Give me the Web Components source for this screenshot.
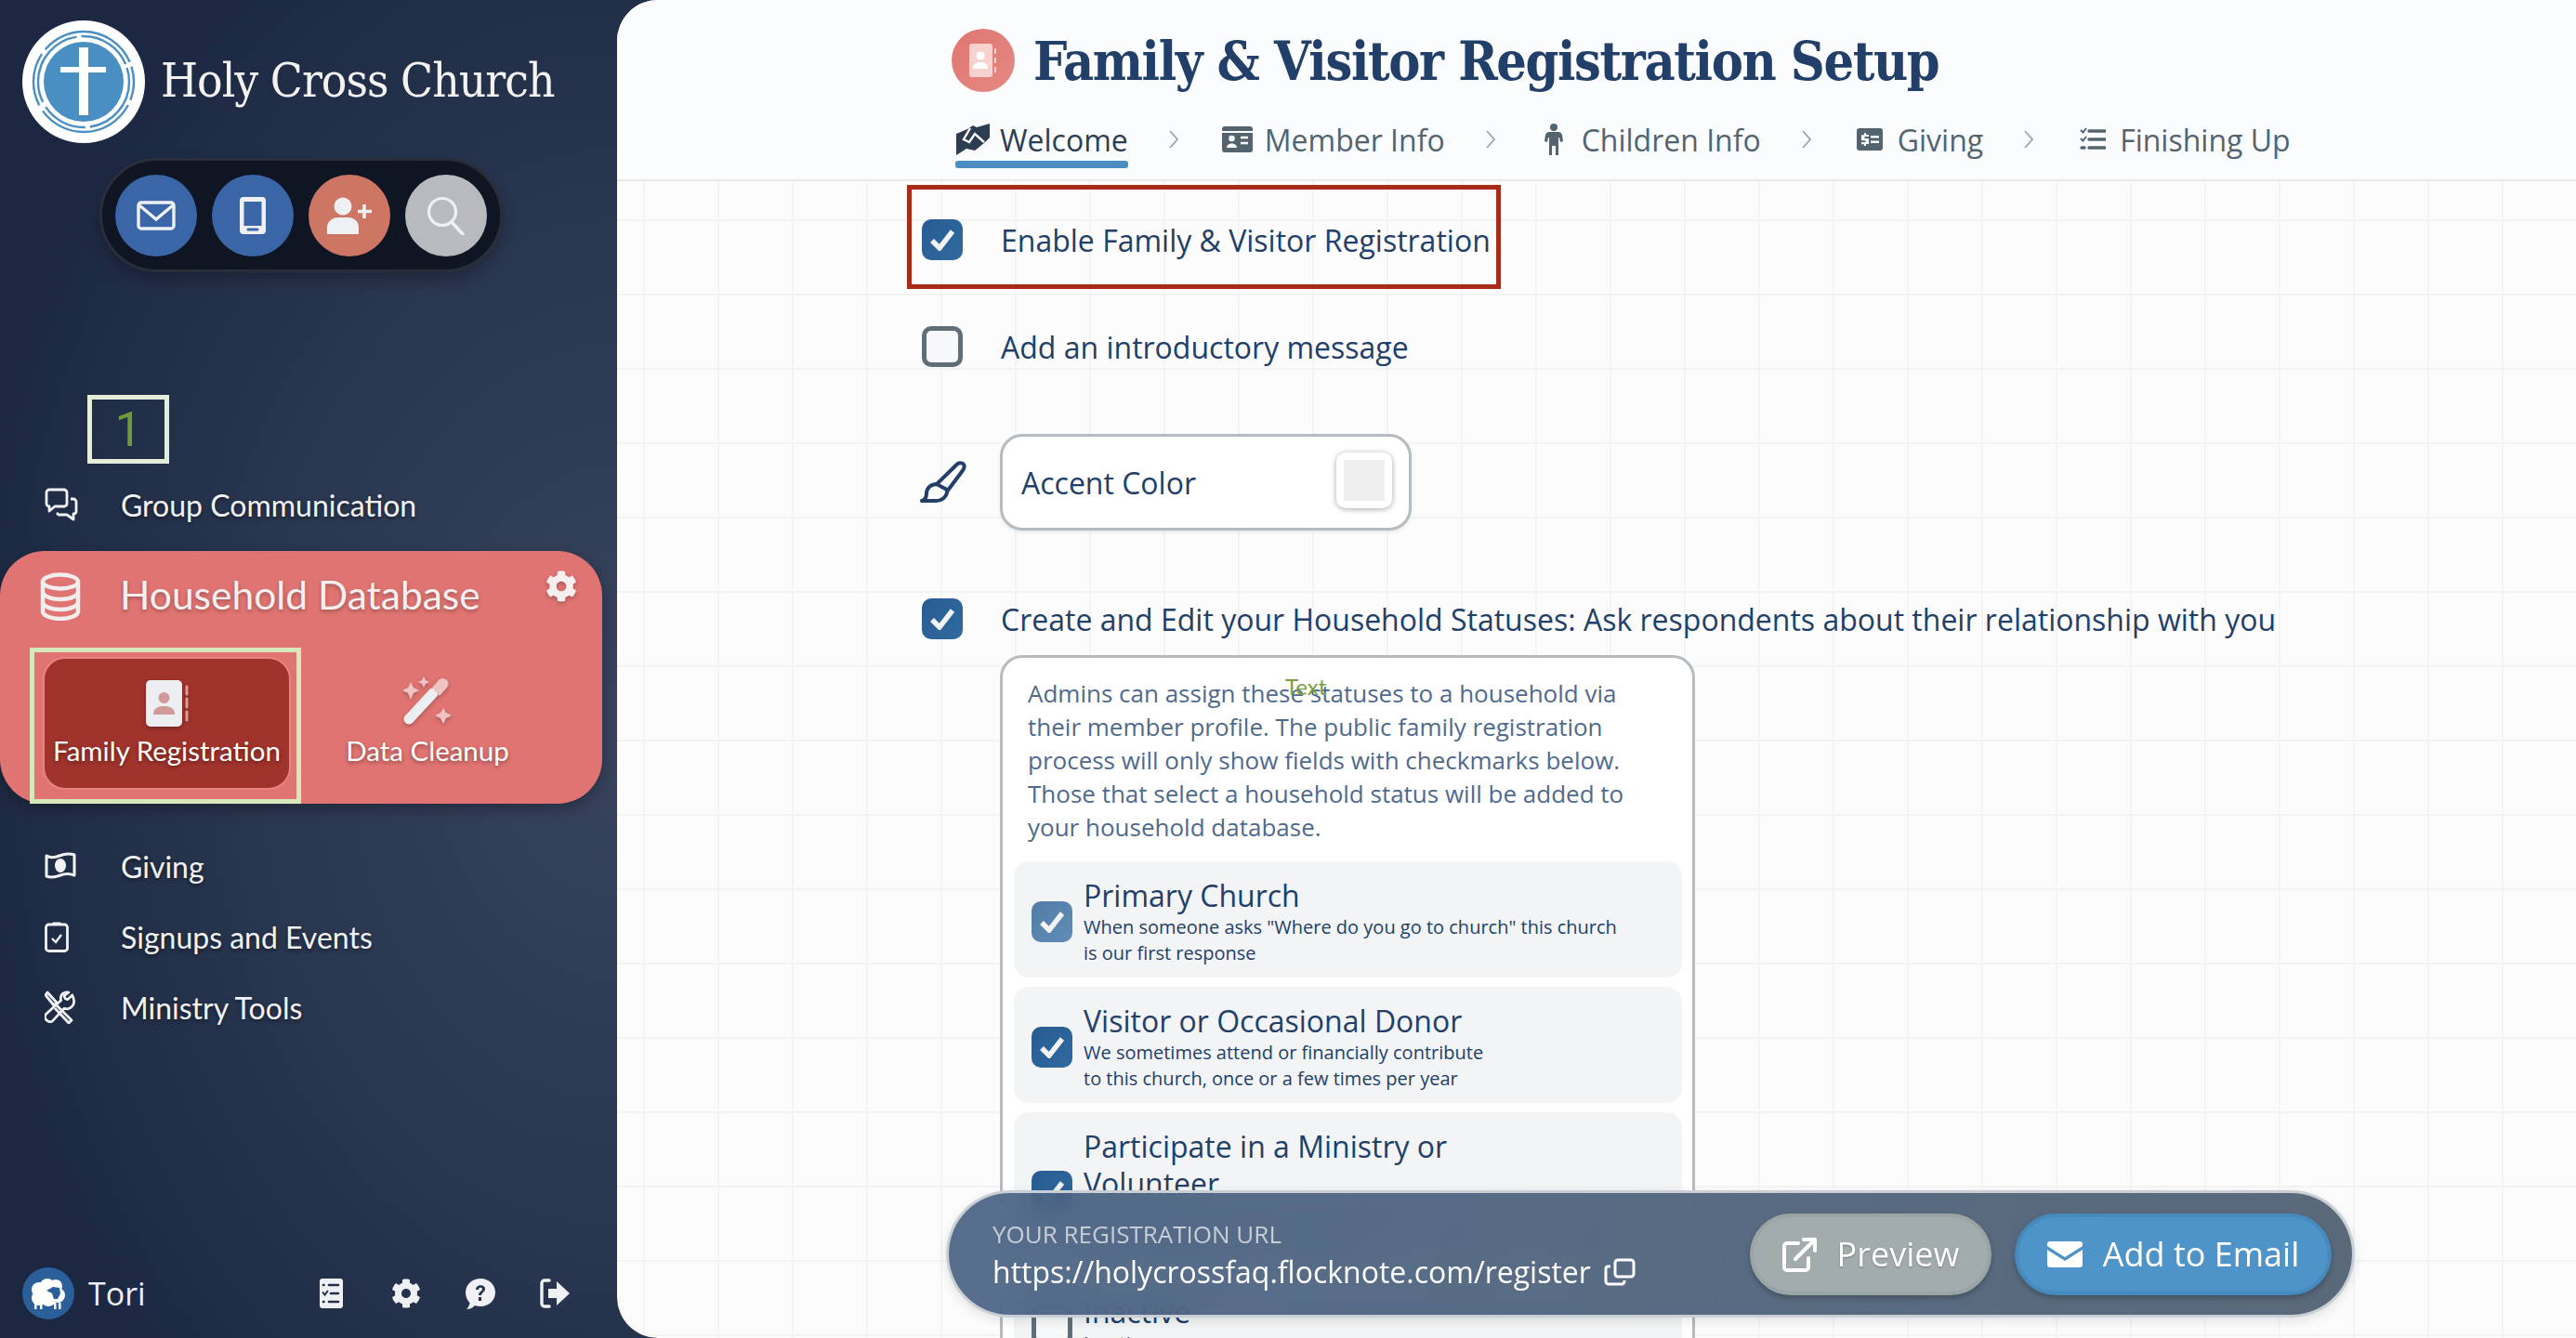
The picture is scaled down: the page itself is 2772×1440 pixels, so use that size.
<!DOCTYPE html>
<html lang="en">
<head>
<meta charset="utf-8">
<title>Family & Visitor Registration Setup</title>
<style>
  html, body { margin: 0; height: 1440px; overflow: hidden; background: #1c2842; }
</style>
</head>
<body>
<app-shell>
  <side-bar slot="side"></side-bar>
  <setup-page slot="main">
    <check-row checked highlight>Enable Family &amp; Visitor Registration</check-row>
    <check-row style="margin-top:40px">Add an introductory message</check-row>
    <accent-field style="margin-top:72px">Accent Color</accent-field>
    <check-row checked style="margin-top:73px">Create and Edit your Household Statuses: Ask respondents about their relationship with you</check-row>
    <status-card style="margin-top:17px">
      <span slot="intro">Admins can assign these statuses to a household via their member profile. The public family registration process will only show fields with checkmarks below. Those that select a household status will be added to your household database.</span>
      <status-option state="faded">
        Primary Church
        <span slot="desc">When someone asks "Where do you go to church" this church<br>is our first response</span>
      </status-option>
      <status-option state="on">
        Visitor or Occasional Donor
        <span slot="desc">We sometimes attend or financially contribute<br>to this church, once or a few times per year</span>
      </status-option>
      <status-option state="on" style="padding-bottom:15px">
        Participate in a Ministry or<br>Volunteer
        <span slot="desc">We help with a ministry or volunteer<br>at this church from time to time</span>
      </status-option>
      <status-option state="off">
        Inactive
        <span slot="desc">Inactive</span>
      </status-option>
    </status-card>
    <url-bar slot="float"></url-bar>
  </setup-page>
</app-shell>

<script>
// icons are all drawn here so every shadow root can share them
const GEAR = 'M487.4 315.7l-42.6-24.6c4.3-23.2 4.3-47 0-70.2l42.6-24.6c4.9-2.8 7.1-8.6 5.5-14-11.1-35.6-30-67.8-54.7-94.6-3.8-4.1-10-5.1-14.8-2.3L380.8 110c-17.9-15.4-38.5-27.3-60.8-35.1V25.8c0-5.6-3.9-10.5-9.4-11.7-36.7-8.2-74.3-7.8-109.2 0-5.5 1.2-9.4 6.1-9.4 11.7V75c-22.2 7.9-42.8 19.8-60.8 35.1L88.7 85.5c-4.9-2.8-11-1.9-14.8 2.3-24.7 26.7-43.6 58.9-54.7 94.6-1.7 5.4.6 11.2 5.5 14L67.3 221c-4.3 23.2-4.3 47 0 70.2l-42.6 24.6c-4.9 2.8-7.1 8.6-5.5 14 11.1 35.6 30 67.8 54.7 94.6 3.8 4.1 10 5.1 14.8 2.3l42.6-24.6c17.9 15.4 38.5 27.3 60.8 35.1v49.2c0 5.6 3.9 10.5 9.4 11.7 36.7 8.2 74.3 7.8 109.2 0 5.5-1.2 9.4-6.1 9.4-11.7v-49.2c22.2-7.9 42.8-19.8 60.8-35.1l42.6 24.6c4.9 2.8 11 1.9 14.8-2.3 24.7-26.7 43.6-58.9 54.7-94.6 1.5-5.5-.7-11.3-5.6-14.1zM256 336c-44.1 0-80-35.9-80-80s35.9-80 80-80 80 35.9 80 80-35.9 80-80 80z';

function svg(w, h, vb, body, extra = '') {
  return `<svg width="${w}" height="${h}" viewBox="${vb}" style="display:block;flex:none" ${extra}>${body}</svg>`;
}

const icons = {
  logo: svg(132, 132, '0 0 132 132', `
    <circle cx="66" cy="66" r="66" fill="#fff"/>
    <circle cx="66" cy="66" r="43" fill="#4a8fc1"/>
    <g fill="none" stroke="#4a8fc1" stroke-width="2.4">
      <circle cx="66" cy="66" r="49" stroke-dasharray="70 5 50 6 92 5 60 4"/>
      <circle cx="66" cy="66" r="54" stroke-dasharray="40 6 110 7 58 6 110 5" stroke-dashoffset="20"/>
    </g>
    <rect x="61" y="29" width="10" height="73" fill="#fff"/>
    <rect x="41" y="50" width="49" height="6" fill="#fff"/>`),
  mail: svg(42, 32, '0 0 42 32', `<rect x="2" y="2" width="38" height="28" rx="3" fill="none" stroke="#eef0f3" stroke-width="3.4"/><path d="M3 5l18 15L39 5" fill="none" stroke="#eef0f3" stroke-width="3.4"/>`),
  phone: svg(28, 40, '0 0 28 40', `<path fill-rule="evenodd" fill="#eef0f3" d="M4 0h20a4 4 0 0 1 4 4v32a4 4 0 0 1-4 4H4a4 4 0 0 1-4-4V4a4 4 0 0 1 4-4zM4.500 5v26h19V5zM9 33.500a1.400 1.400 0 0 0 0 3h10a1.400 1.400 0 0 0 0-3z"/>`),
  userplus: svg(48, 40, '0 0 48 40', `<circle cx="17" cy="10" r="9.500" fill="#eef0f3"/><path d="M0 40v-7c0-7 6-11 12-11h10c7 0 12 4 12 11v7z" fill="#eef0f3"/><path d="M40 8v15M33 15.500h15" stroke="#eef0f3" stroke-width="3.600"/>`),
  search: svg(42, 42, '0 0 42 42', `<circle cx="17" cy="17" r="14.500" fill="none" stroke="#eef0f3" stroke-width="3.200"/><path d="M27 28l12 13" stroke="#eef0f3" stroke-width="3.600" stroke-linecap="round"/>`),
  chat: svg(36, 36, '0 0 36 36', `<g fill="none" stroke="#f0f2f5" stroke-width="2.800" stroke-linejoin="round"><path d="M5 2h16a3 3 0 0 1 3 3v12a3 3 0 0 1-3 3H11l-6 5v-5a3 3 0 0 1-3-3V5a3 3 0 0 1 3-3z"/><path d="M28 12h3a3 3 0 0 1 3 3v11a3 3 0 0 1-3 2v6l-7-5H15l-2-2"/></g>`),
  db: svg(44, 52, '0 0 44 52', `<g fill="none" stroke="#f3eeee" stroke-width="4.400"><ellipse cx="22" cy="10" rx="19" ry="7.500"/><path d="M3 10v32c0 4 8 8 19 8s19-4 19-8V10"/><path d="M3 21c0 4 8 8 19 8s19-4 19-8M3 32c0 4 8 8 19 8s19-4 19-8"/></g>`),
  gear: (s, c) => svg(s, s, '0 0 512 512', `<path fill="${c}" d="${GEAR}"/>`),
  book: svg(46, 50, '0 0 46 50', `<rect x="0" y="0" width="39" height="50" rx="5" fill="#eceef1"/><circle cx="19.500" cy="19" r="6" fill="#d19a98"/><path d="M8 37c0-7 5-9 11.500-9S31 30 31 37z" fill="#d19a98"/><path d="M44 7v8M44 20v9M44 34v9" stroke="#e39a96" stroke-width="3" stroke-linecap="round"/>`),
  wand: svg(56, 54, '0 0 56 54', `<path d="M8 46L34 18" stroke="#eceef1" stroke-width="11" stroke-linecap="round"/><path d="M33 12l7-8a6 6 0 0 1 9 8l-8 9z" fill="#eec3c2"/><path d="M10 6l3 6 6 3-6 3-3 7-3-7-6-3 6-3zM24 0l2 4 4 2-4 2-2 4-2-4-4-2 4-2zM45 34l3 5 6 3-6 3-3 6-3-6-6-3 6-3z" fill="#eec3c2"/>`),
  cash: svg(34, 34, '0 0 34 34', `<path d="M2 6c5 3 9 2 14 0s10-3 16-1v22c-5-2-10-2-15 0s-10 3-15 1z" fill="none" stroke="#f0f2f5" stroke-width="3" stroke-linejoin="round"/><ellipse cx="17" cy="16.500" rx="6" ry="7.500" fill="#f0f2f5"/>`),
  clipboard: svg(26, 34, '0 0 26 34', `<rect x="1.500" y="4" width="23" height="28.500" rx="3" fill="none" stroke="#f0f2f5" stroke-width="2.800"/><path d="M8 5V3a1.500 1.500 0 0 1 1.500-1.500h7A1.500 1.500 0 0 1 18 3v2z" fill="#f0f2f5"/><path d="M8 19l4 4 6-8" fill="none" stroke="#f0f2f5" stroke-width="2.400"/>`),
  tools: svg(34, 36, '0 0 34 36', `<g fill="none" stroke="#f0f2f5" stroke-width="2.800" stroke-linejoin="round"><path d="M3 2L1 5l9 11 3-3z"/><path d="M13 16l16 16-3 3-15-16"/><path d="M31 4l-5 5-3-1-1-3 5-4c-5-1-9 2-9 7 0 1 .500 2 .500 2L2 25c-2 2-2 5 0 7s5 3 7 1l13-14c5 2 11-2 11-8 0-2-1-4-2-7z" transform="translate(0 1) scale(.96)"/></g>`),
  sheep: svg(56, 56, '0 0 56 56', `
    <circle cx="28" cy="28" r="28" fill="#2a5f9a"/>
    <g fill="#fff"><circle cx="18" cy="24" r="8"/><circle cx="27" cy="20" r="8"/><circle cx="36" cy="20" r="7"/><circle cx="18" cy="33" r="8"/><circle cx="28" cy="33" r="9"/><circle cx="38" cy="30" r="8"/>
    <rect x="13" y="38" width="2.500" height="7"/><rect x="19" y="38" width="2.500" height="7"/><rect x="34" y="38" width="2.500" height="7"/><rect x="39" y="38" width="2.500" height="7"/></g>
    <path d="M26 25l7-4 7 1 1 6-3 6-4 0-2-6z" fill="#2a5f9a"/>`),
  list: svg(25, 32, '0 0 25 32', `<rect width="25" height="32" rx="3" fill="#eef0f3"/><g fill="none" stroke="#24304b" stroke-width="2.600" stroke-linecap="round"><path d="M10 7h10M12 16h8M10 25h10M4 7h.5M4 25h.5"/><path d="M3.500 15l2 2.500 3-4" stroke-width="2"/></g>`),
  help: svg(32, 33, '0 0 32 33', `<path fill-rule="evenodd" fill="#eef0f3" d="M16 0c9 0 16 6.500 16 15s-7 15-16 15c-2 0-4-.400-6-1-2 2-5 4-9 4 2-2 3-4 3.500-7C1.500 23 0 19.500 0 15 0 6.500 7 0 16 0zM11 12h3c0-3 4-3 4-.5 0 2-4 2.500-4 6.500h3c0-3 4-3.500 4-7 0-5-10-5.500-10 1zM14 20v4h3v-4z"/>`),
  logout: svg(32, 32, '0 0 32 32', `<path d="M10 2H5a3 3 0 0 0-3 3v22a3 3 0 0 0 3 3h5" fill="none" stroke="#eef0f3" stroke-width="3.400" stroke-linecap="round"/><path d="M9 11h9V3l14 13-14 13v-8H9z" fill="#eef0f3"/>`),
  chevron: svg(10, 20, '0 0 10 20', `<path d="M1 1l8 9-8 9" fill="none" stroke="#9aa5a8" stroke-width="1.800"/>`, 'class="chev"'),
  handshake: svg(36, 34, '0 0 36 34', `<path fill="#2d3e52" d="M0 11L12 6l6-4 4 2L36 0v15l-6 6-10 8-9-2-11 7z"/><path d="M15 5L8 17l6 3 6-9 10 9" stroke="#fbfcfe" stroke-width="2.400" fill="none"/>`),
  card: svg(33, 28, '0 0 33 28', `<path fill="#53646f" d="M3 0h27a3 3 0 0 1 3 3v2H0V3a3 3 0 0 1 3-3zM0 7h33v18a3 3 0 0 1-3 3H3a3 3 0 0 1-3-3z"/><circle cx="10.500" cy="13" r="3.300" fill="#fbfcfe"/><path d="M5 23c0-6 11-6 11 0z" fill="#fbfcfe"/><path d="M20 12h8M20 18h8" stroke="#fbfcfe" stroke-width="2.600"/>`),
  child: svg(20, 34, '0 0 20 34', `<circle cx="10" cy="4" r="4" fill="#53646f"/><path d="M5 9h10c2 0 3 1 4 3l1 7-3 1-1-5-1 0v19h-3V24H8v10H5V15l-1 0-1 5-3-1 1-7c1-2 2-3 4-3z" fill="#53646f"/>`),
  money: svg(28, 24, '0 0 28 24', `<path fill-rule="evenodd" fill="#53646f" d="M3 0h22a3 3 0 0 1 3 3v18a3 3 0 0 1-3 3H3a3 3 0 0 1-3-3V3a3 3 0 0 1 3-3zM15 8v2.500h9V8zM15 13.500V16h9v-2.500zM8 5v2.200H5v6h4.500v1.800H5v2.200h3V19h2v-2h3v-6H8.500V9H13V7h-3V5z"/>`),
  tasks: svg(28, 26, '0 0 28 26', `<g stroke="#53646f" fill="none"><path d="M10 4h18M10 13h18M10 22h18" stroke-width="3.400" stroke-linecap="round"/><path d="M1 3l2.500 2.500L7 1M1 12l2.500 2.500L7 10" stroke-width="2"/><path d="M2 22h3" stroke-width="3.400" stroke-linecap="round"/></g>`),
  brush: svg(50, 46, '0 0 50 46', `<g fill="none" stroke="#213f68" stroke-width="4" stroke-linejoin="round" stroke-linecap="round"><path d="M18 25L40 3.500c2-2 7-1.500 7.500 1.500.5 2-.5 4-2 6L29 33"/><path d="M18 25c-7 0-11 5-11 10 0 3-1 7-5 8h15c8 0 13-6 12-12z"/></g>`),
  external: svg(37, 38, '0 0 37 38', `<g fill="none" stroke="#fff" stroke-width="4" stroke-linecap="round" stroke-linejoin="round"><path d="M17 7H5a3 3 0 0 0-3 3v23a3 3 0 0 0 3 3h20a3 3 0 0 0 3-3V23"/><path d="M14 24L34 4M23 3h12v12"/></g>`),
  envelope: svg(38, 28, '0 0 38 28', `<path fill="#fff" d="M3 0h32a3 3 0 0 1 3 3v2L19 17 0 5V3a3 3 0 0 1 3-3zM0 9v16a3 3 0 0 0 3 3h32a3 3 0 0 0 3-3V9L19 21z"/>`),
  copy: svg(34, 30, '0 0 34 30', `<g fill="none" stroke="#fff" stroke-width="3" stroke-linejoin="round"><rect x="12" y="2" width="20" height="18" rx="3"/><path d="M7 9H4a2.500 2.500 0 0 0-2 2.500V25a3 3 0 0 0 3 3h14a3 3 0 0 0 3-3v-1"/></g>`),
  titlebook: svg(30, 36, '0 0 30 36', `<rect width="25" height="36" rx="3" fill="#f7d2cf"/><circle cx="12" cy="13" r="4.500" fill="#fff"/><path d="M4 27c0-5 3-7 8-7s8 2 8 7z" fill="#fff"/><path d="M28 5v6M28 15v6M28 25v6" stroke="#f7d2cf" stroke-width="2"/>`),
  check: svg(28, 24, '0 0 28 24', `<path d="M3 13l8 8L25 3" fill="none" stroke="#f0f2f4" stroke-width="5.500"/>`)
};

function makeEl(name, css, html) {
  customElements.define(name, class extends HTMLElement {
    constructor() {
      super();
      this.attachShadow({ mode: 'open' });
    }
    connectedCallback() {
      const body = typeof html === 'function' ? html(this) : html;
      this.shadowRoot.innerHTML = `<style>${css}</style>${body}`;
    }
  });
}

makeEl('app-shell', `
  :host { display: grid; grid-template-columns: 664px 1fr; width: 2772px; height: 1440px; overflow: hidden;
    background: radial-gradient(ellipse 720px 1000px at 664px 54%, #38445d 0%, #29364f 55%, #1c2842 100%); }
`, `<slot name="side"></slot><slot name="main"></slot>`);

makeEl('nav-item', `
  :host { display: flex; align-items: center; height: 76px; color: #f0f2f5; font: 400 32px Lato, sans-serif;
    text-shadow: 0 2px 4px rgba(0,0,0,.45); }
  .in { width: 130px; padding-left: 48px; box-sizing: border-box; }
`, el => `<div class="in">${icons[el.getAttribute('icon')]}</div><slot></slot>`);

makeEl('db-tile', `
  :host { display: flex; flex-direction: column; align-items: center; color: #fff; font: 400 29.500px Lato, sans-serif;
    text-shadow: 0 2px 4px rgba(0,0,0,.4); box-sizing: border-box; }
  .ic { height: 50px; display: flex; align-items: flex-end; margin-bottom: 6px; filter: drop-shadow(0 2px 2px rgba(0,0,0,.25)); }
  span { line-height: 40px; white-space: nowrap; }
`, el => `<div class="ic">${icons[el.getAttribute('icon')]}</div><span><slot></slot></span>`);

makeEl('db-card', `
  :host { display: block; width: 648px; height: 272px; box-sizing: border-box; margin-top: 12px; position: relative;
    background: #e07472; border-radius: 48px; box-shadow: 0 6px 16px rgba(0,0,0,.28); }
  .head { display: flex; align-items: center; height: 98px; padding-left: 43px; color: #f6efef;
    font: 400 42.500px Lato, sans-serif; text-shadow: 0 2px 4px rgba(0,0,0,.3); }
  .head span { margin: 0 0 5px 42px; flex: 1; }
  .head .g { margin: -22px 27px 0 0; filter: drop-shadow(0 2px 2px rgba(0,0,0,.25)); }
  .tiles { display: flex; margin: 6px 0 0 32px; }
  .sel { width: 292px; height: 168px; box-sizing: border-box; border: 5px solid #d8e8bd; padding: 5px 6px 10px 9px; }
  .on { height: 143px; box-sizing: border-box; background: #a1332d; border: 2px solid #e8857f; border-radius: 24px; padding-top: 23px; }
  .off { width: 272px; padding-top: 35px; }
`, `
  <div class="head">${icons.db}<span>Household Database</span><div class="g">${icons.gear(34, '#f6efef')}</div></div>
  <div class="tiles">
    <div class="sel"><div class="on"><db-tile icon="book">Family Registration</db-tile></div></div>
    <div class="off"><db-tile icon="wand">Data Cleanup</db-tile></div>
  </div>`);

makeEl('side-bar', `
  :host { display: flex; flex-direction: column; height: 1440px; box-sizing: border-box; padding-bottom: 20px; }
  .brand { display: flex; align-items: center; gap: 17px; margin: 22px 0 0 24px; color: #f3f3f1;
    font: 400 51px "DejaVu Serif Condensed", "Liberation Serif", serif; letter-spacing: -1px; }
  .brand span { margin-bottom: 4px; }
  .pill { display: flex; gap: 16px; width: 434px; height: 123px; margin: 16px 0 0 107px; padding: 15px 14px; box-sizing: border-box;
    background: #0f1522; border: 3px solid #2a2e38; border-radius: 62px; box-shadow: 0 8px 16px rgba(0,0,0,.25); }
  .pill div { width: 88px; height: 88px; border-radius: 50%; display: flex; align-items: center; justify-content: center; }
  .note { width: 88px; height: 74px; margin: 132px 0 0 94px; box-sizing: border-box; border: 5px solid #e4edd8;
    color: #6f9a3a; font: 400 52px Roboto, sans-serif; display: flex; align-items: center; justify-content: center; }
  .top { margin-top: 6px; }
  .after { margin-top: 29px; }
  .foot { margin-top: auto; display: flex; align-items: center; height: 56px; padding-left: 24px; color: #eef0f3;
    font: 400 34px "Open Sans", sans-serif; }
  .foot span { margin-left: 15px; width: 249px; flex: none; }
  .foot .ics { display: flex; align-items: center; gap: 48px; }
  .foot .ics > :first-child { margin-right: 4px; }
`, `
  <div class="brand">${icons.logo}<span>Holy Cross Church</span></div>
  <div class="pill">
    <div style="background:#3a66a8">${icons.mail}</div>
    <div style="background:#3a66a8">${icons.phone}</div>
    <div style="background:#cd7663">${icons.userplus}</div>
    <div style="background:#b9babd">${icons.search}</div>
  </div>
  <div class="note">1</div>
  <nav-item class="top" icon="chat">Group Communication</nav-item>
  <db-card></db-card>
  <nav-item class="after" icon="cash">Giving</nav-item>
  <nav-item icon="clipboard">Signups and Events</nav-item>
  <nav-item icon="tools">Ministry Tools</nav-item>
  <div class="foot">${icons.sheep}<span>Tori</span>
    <div class="ics">${icons.list}${icons.gear(32, '#eef0f3')}${icons.help}${icons.logout}</div>
  </div>`);

makeEl('wizard-tab', `
  :host { display: flex; align-items: center; gap: 13px; color: #53646f; font: 400 32px "Open Sans", sans-serif;
    height: 48px; position: relative; white-space: nowrap; }
  :host([active]) { color: #2d3e52; }
  :host([active])::after { content: ""; position: absolute; left: -2px; right: 0; top: 47px; height: 8px; background: #4a8dc0; border-radius: 3px; }
  .i { width: 33px; display: flex; justify-content: center; }
`, el => `<div class="i">${icons[el.getAttribute('icon')]}</div><slot></slot>`);

makeEl('setup-page', `
  :host { display: block; position: relative; height: 1440px; overflow: hidden; border-radius: 44px 0 0 44px;
    background-color: #fcfcfc;
    background-image: linear-gradient(#f2f4f5 2px, transparent 2px), linear-gradient(90deg, #f2f4f5 2px, transparent 2px);
    background-size: 80px 80px; background-position: 28px 76px; }
  header { height: 195px; box-sizing: border-box; background: #fbfcfe; border-bottom: 2px solid #e8eaec; padding: 31px 0 0 360px; }
  .title { display: flex; align-items: center; gap: 20px; height: 68px; color: #213f68;
    font: 700 57px "DejaVu Serif Condensed", "Liberation Serif", serif; letter-spacing: -1.400px; white-space: nowrap; }
  .badge { width: 68px; height: 68px; border-radius: 50%; background: linear-gradient(135deg, #e07570, #e48a84);
    display: flex; align-items: center; justify-content: center; }
  .tabs { display: flex; align-items: center; gap: 44px; margin: 27px 0 0 6px; }
  .tabs .chev { margin-right: 3px; }
  .body { padding: 4px 0 0 312px; }
`, `
  <header>
    <div class="title"><div class="badge">${icons.titlebook}</div>Family &amp; Visitor Registration Setup</div>
    <div class="tabs">
      <wizard-tab icon="handshake" active>Welcome</wizard-tab>${icons.chevron}
      <wizard-tab icon="card">Member Info</wizard-tab>${icons.chevron}
      <wizard-tab icon="child">Children Info</wizard-tab>${icons.chevron}
      <wizard-tab icon="money">Giving</wizard-tab>${icons.chevron}
      <wizard-tab icon="tasks">Finishing Up</wizard-tab>
    </div>
  </header>
  <div class="body"><slot></slot></div>
  <slot name="float"></slot>`);

makeEl('check-box', `
  :host { display: block; width: 44px; height: 44px; flex: none; box-sizing: border-box; border-radius: 10px;
    background: linear-gradient(135deg, #285c92, #2f6a9f); display: flex; align-items: center; justify-content: center; }
  :host([state="off"]) { background: #f7f8f9; border: 5px solid #5f6f78; }
  :host([state="faded"]) { background: linear-gradient(135deg, #527ca6, #5f8db8); }
`, el => el.getAttribute('state') === 'off' ? '' : icons.check);

makeEl('check-row', `
  :host { display: flex; align-items: center; gap: 41px; height: 44px; padding-left: 16px; color: #213f68;
    font: 400 32px "Open Sans", sans-serif; white-space: nowrap; }
  :host([highlight]) { width: 639px; height: 112px; box-sizing: border-box; padding: 6px 0 0 11px; border: 5px solid #a82b17; }
`, el => `<check-box state="${el.hasAttribute('checked') ? 'on' : 'off'}"></check-box><slot></slot>`);

makeEl('accent-field', `
  :host { display: flex; align-items: center; gap: 37px; padding-left: 14px; color: #213f68; font: 400 32px "Open Sans", sans-serif; }
  .box { width: 443px; height: 104px; box-sizing: border-box; background: #fff; border: 3px solid #b5bbbf; border-radius: 24px;
    display: flex; align-items: center; justify-content: space-between; padding: 0 18px 0 20px; box-shadow: 0 2px 4px rgba(0,0,0,.08); margin-left: -1px; }
  .sw { width: 60px; height: 60px; box-sizing: border-box; padding: 8px; background: #fff; border-radius: 10px; box-shadow: 0 1px 6px rgba(0,0,0,.35); margin-top: -4px; }
  .sw div { height: 100%; background: #efefef; }
`, `${icons.brush}<div class="box"><span><slot></slot></span><div class="sw"><div></div></div></div>`);

makeEl('status-card', `
  :host { display: block; width: 748px; margin-left: 100px; box-sizing: border-box; background: #fff; border: 3px solid #b5bbbf;
    border-radius: 24px; padding: 20px 11px 0 12px; position: relative; }
  .intro { padding: 0 20px 0 15px; font: 400 26px/36px "Open Sans", sans-serif; color: #4f6a8d; margin-bottom: 19px; }
  .list { display: flex; flex-direction: column; gap: 10px; }
  .tag { position: absolute; left: 304px; top: 16px; color: #77a13f; font: 400 24px Lato, sans-serif; }
`, `
  <div class="intro"><slot name="intro"></slot></div>
  <div class="tag">Text</div>
  <div class="list"><slot></slot></div>`);

makeEl('status-option', `
  :host { display: flex; align-items: center; gap: 12px; box-sizing: border-box; padding: 17px 19px 12px; background: #f3f4f6;
    border-radius: 16px; color: #213f68; }
  .t { font: 400 32px/40px "Open Sans", sans-serif; }
  .d { font: 400 20px/28px "Open Sans", sans-serif; }
`, el => `<check-box state="${el.getAttribute('state')}"></check-box>
  <div><div class="t"><slot></slot></div><div class="d"><slot name="desc"></slot></div></div>`);

makeEl('url-bar', `
  :host { position: absolute; left: 354px; top: 1281px; width: 1516px; height: 137px; box-sizing: border-box;
    display: flex; align-items: center; padding: 0 22px 0 47px; border-radius: 69px; border: 3px solid rgba(215,218,222,.9);
    background: linear-gradient(100deg, rgba(68,94,128,.9), rgba(80,96,114,.94)); backdrop-filter: blur(14px);
    box-shadow: 0 4px 12px rgba(0,0,0,.1); }
  .lab { color: #c6ced6; font: 400 26px/38px "Open Sans", sans-serif; text-transform: uppercase; }
  .url { display: flex; align-items: center; gap: 14px; color: #fff; font: 400 32px/44px "Open Sans", sans-serif; white-space: nowrap; }
  .btns { margin-left: auto; display: flex; gap: 25px; }
  .btn { display: flex; align-items: center; justify-content: center; gap: 22px; height: 88px; border-radius: 44px; box-sizing: border-box;
    color: #fff; font: 400 36px "Open Sans", sans-serif; box-shadow: 0 3px 6px rgba(0,0,0,.25); }
  .pre { width: 260px; background: #a3acac; border: 4px solid #9aa4a4; text-shadow: 0 1px 2px rgba(0,0,0,.3); }
  .add { width: 341px; background: #4f94c8; border: 4px solid #4689bd; }
`, `
  <div>
    <div class="lab">Your Registration URL</div>
    <div class="url">https://holycrossfaq.flocknote.com/register ${icons.copy}</div>
  </div>
  <div class="btns">
    <div class="btn pre">${icons.external}Preview</div>
    <div class="btn add">${icons.envelope}Add to Email</div>
  </div>`);
</script>
</body>
</html>
